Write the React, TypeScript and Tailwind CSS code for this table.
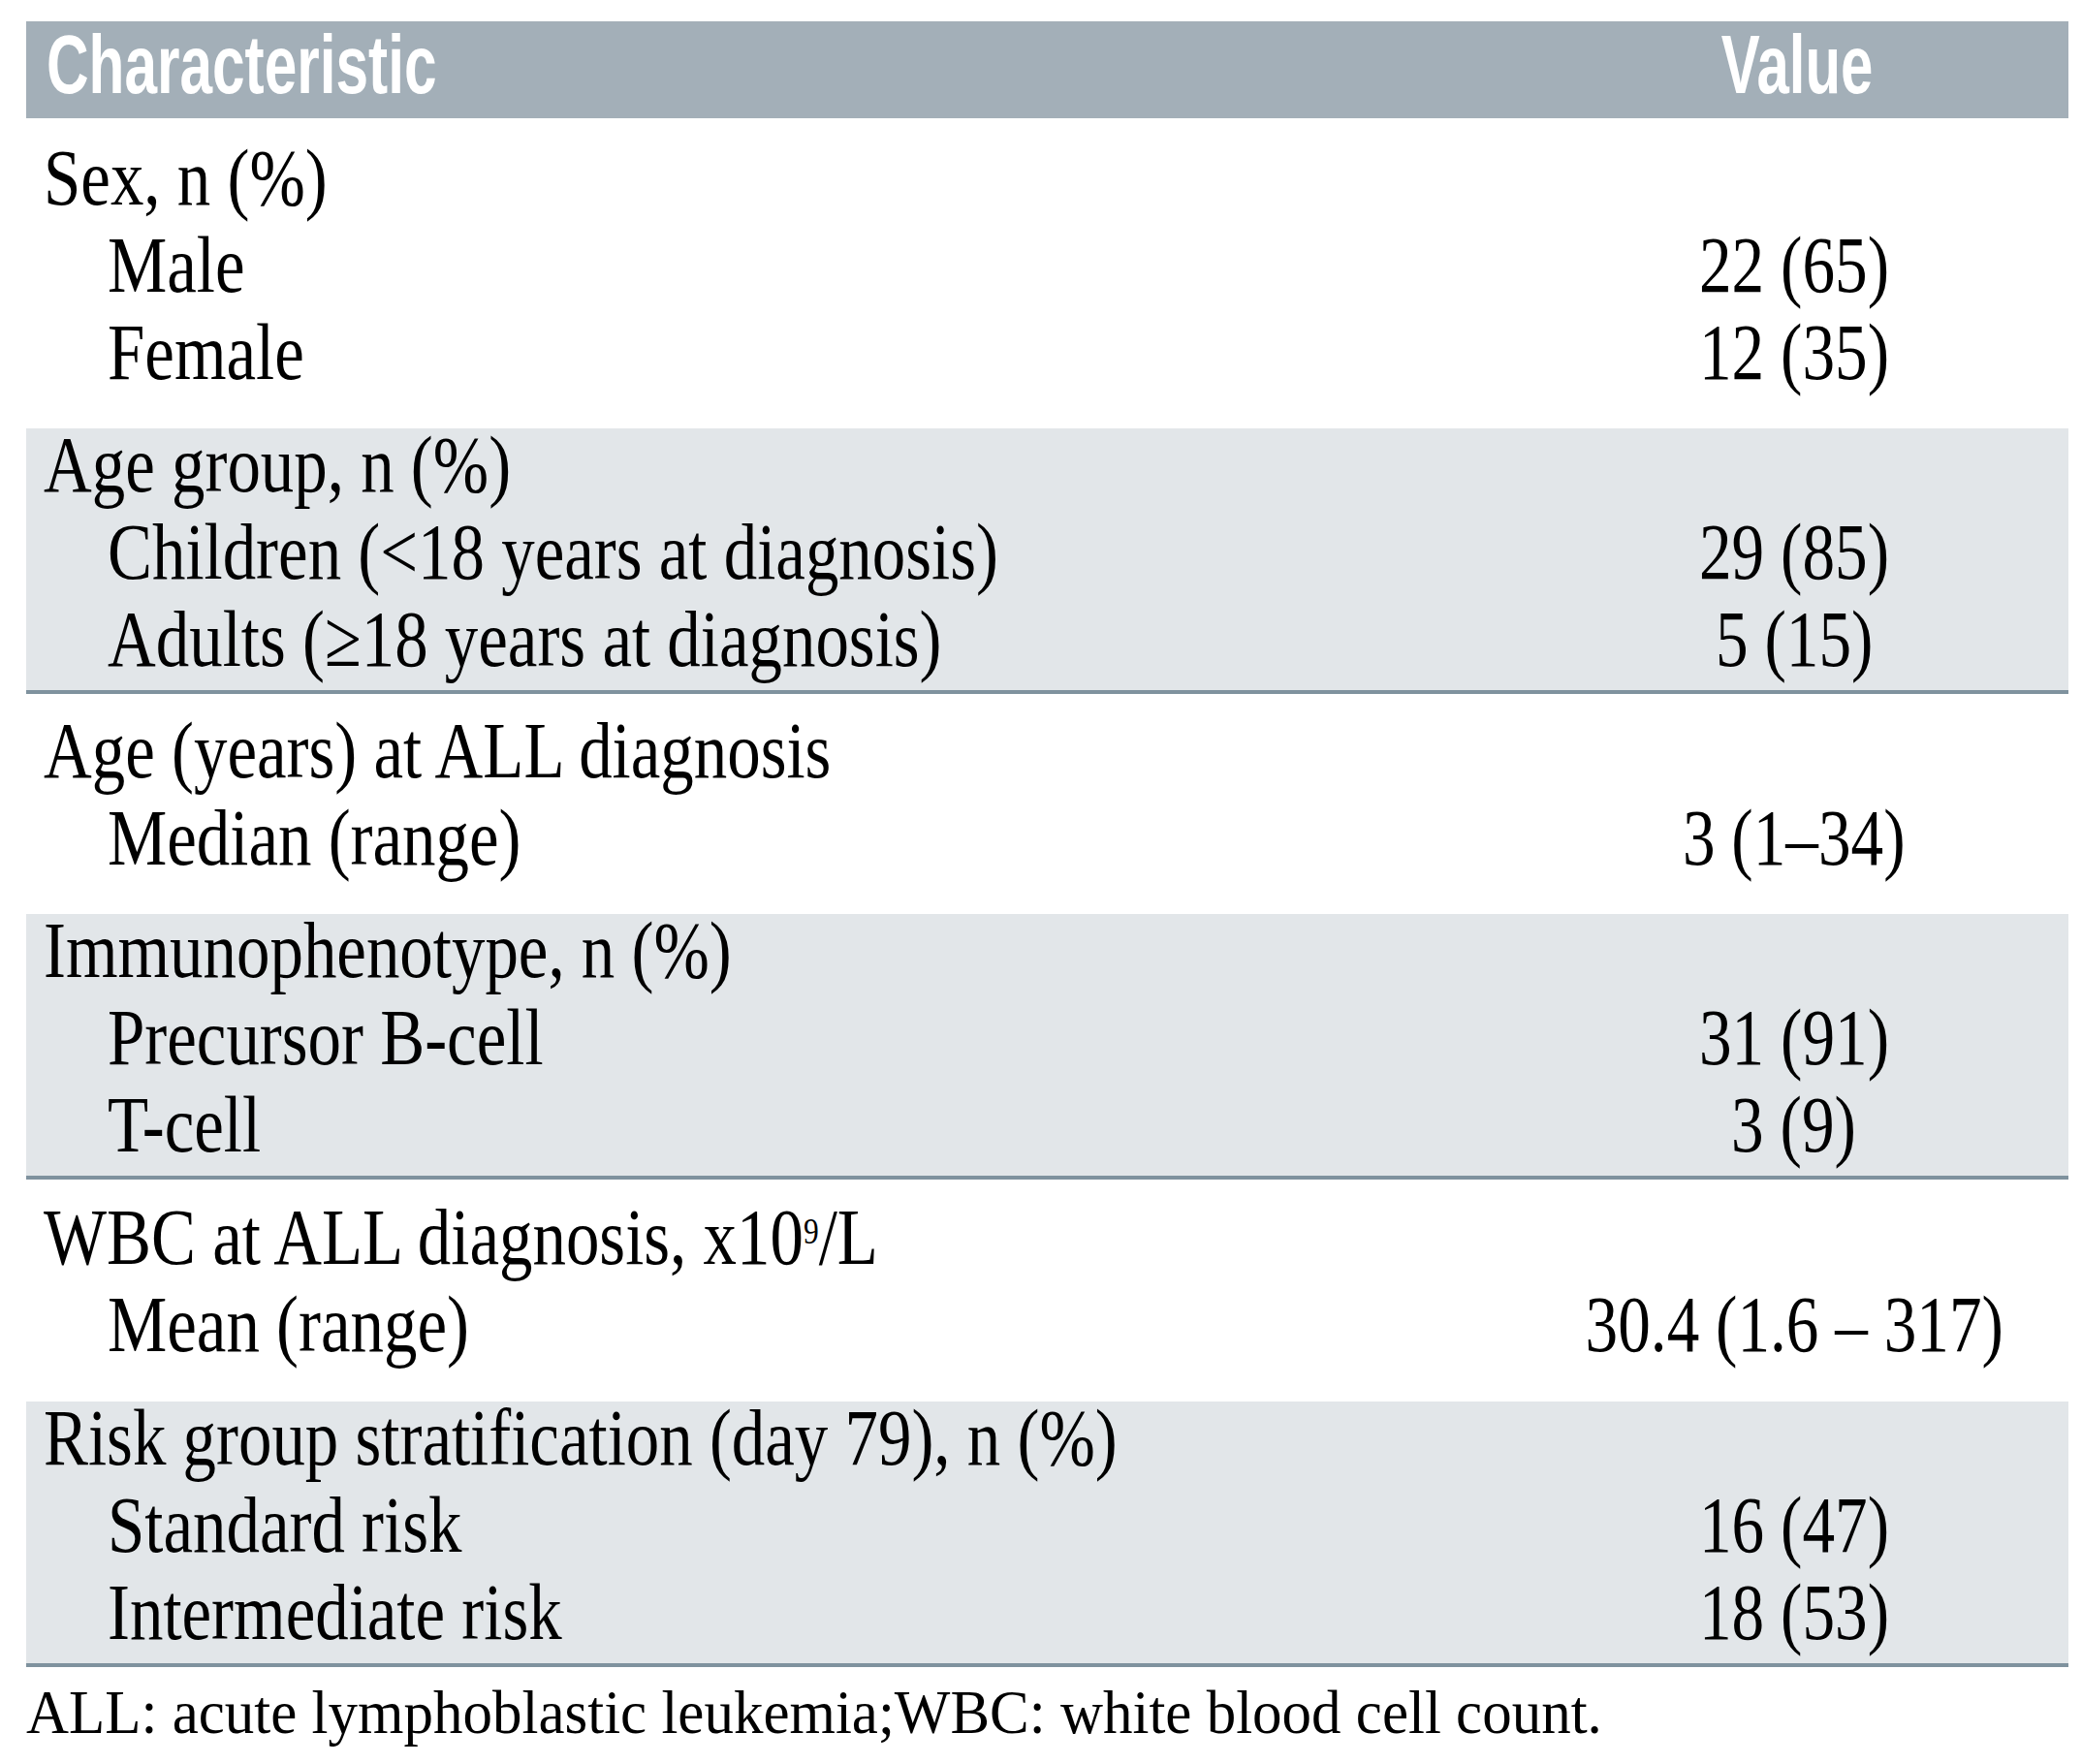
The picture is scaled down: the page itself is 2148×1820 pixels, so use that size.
import React from "react";

type Group = {
  title: React.ReactNode;
  shaded: boolean;
  pad: string;
  items: [string, string][];
};

const groups: Group[] = [
  {
    title: "Sex, n (%)",
    shaded: false,
    pad: "pt-[24px] pb-[42px]",
    items: [
      ["Male", "22 (65)"],
      ["Female", "12 (35)"],
    ],
  },
  {
    title: "Age group, n (%)",
    shaded: true,
    pad: "pb-4",
    items: [
      ["Children (<18 years at diagnosis)", "29 (85)"],
      ["Adults (≥18 years at diagnosis)", "5 (15)"],
    ],
  },
  {
    title: "Age (years) at ALL diagnosis",
    shaded: false,
    pad: "pt-[21px] pb-[42px]",
    items: [["Median (range)", "3 (1–34)"]],
  },
  {
    title: "Immunophenotype, n (%)",
    shaded: true,
    pad: "pb-4",
    items: [
      ["Precursor B-cell", "31 (91)"],
      ["T-cell", "3 (9)"],
    ],
  },
  {
    title: (
      <>
        WBC at ALL diagnosis, x10
        <sup className="text-[38px] -top-[21px]">9</sup>/L
      </>
    ),
    shaded: false,
    pad: "pt-[22px] pb-[43px]",
    items: [["Mean (range)", "30.4 (1.6 – 317)"]],
  },
  {
    title: "Risk group stratification (day 79), n (%)",
    shaded: true,
    pad: "pb-4",
    items: [
      ["Standard risk", "16 (47)"],
      ["Intermediate risk", "18 (53)"],
    ],
  },
];

function Cell({ children, indent }: { children: React.ReactNode; indent?: boolean }) {
  return (
    <div className={`h-[74px] leading-[74px] whitespace-nowrap ${indent ? "pl-[84px]" : "pl-[18px]"}`}>
      <span className="inline-block origin-left scale-x-[0.83]">{children}</span>
    </div>
  );
}

function ValueCell({ children }: { children?: React.ReactNode }) {
  return (
    <div className="h-[74px] leading-[74px] whitespace-nowrap text-center pr-[14px]">
      {children ? <span className="inline-block scale-x-[0.81]">{children}</span> : null}
    </div>
  );
}

export default function App() {
  return (
    <div className="w-[2148px] h-[1820px] bg-white pt-[22px] pl-[27px] pr-[14px] text-black">
      <div className="grid grid-cols-[1fr_552px] h-[100px] bg-[#a3afb8] text-white font-['Liberation_Sans',Arial,sans-serif] font-bold text-[85px] leading-[90px]">
        <div className="pl-[21px] whitespace-nowrap">
          <span className="inline-block origin-left scale-x-[0.71]">Characteristic</span>
        </div>
        <div className="text-center whitespace-nowrap pr-[8px]">
          <span className="inline-block scale-x-[0.705]">Value</span>
        </div>
      </div>

      <div className="font-['Liberation_Serif','Times_New_Roman',serif] text-[83px]">
        {groups.map((g, i) => (
          <div
            key={i}
            className={`grid grid-cols-[1fr_552px] gap-y-4 ${g.pad} ${
              g.shaded ? "bg-[#e2e6e9] border-b-4 border-[#7f929e]" : ""
            }`}
          >
            <Cell>{g.title}</Cell>
            <ValueCell />
            {g.items.map(([label, value], j) => (
              <React.Fragment key={j}>
                <Cell indent>{label}</Cell>
                <ValueCell>{value}</ValueCell>
              </React.Fragment>
            ))}
          </div>
        ))}
      </div>

      <div className="mt-[9px] font-['Liberation_Serif','Times_New_Roman',serif] text-[63px] leading-[76px] whitespace-nowrap">
        <span className="inline-block origin-left scale-x-[0.968]">
          ALL: acute lymphoblastic leukemia;WBC: white blood cell count.
        </span>
      </div>
    </div>
  );
}
